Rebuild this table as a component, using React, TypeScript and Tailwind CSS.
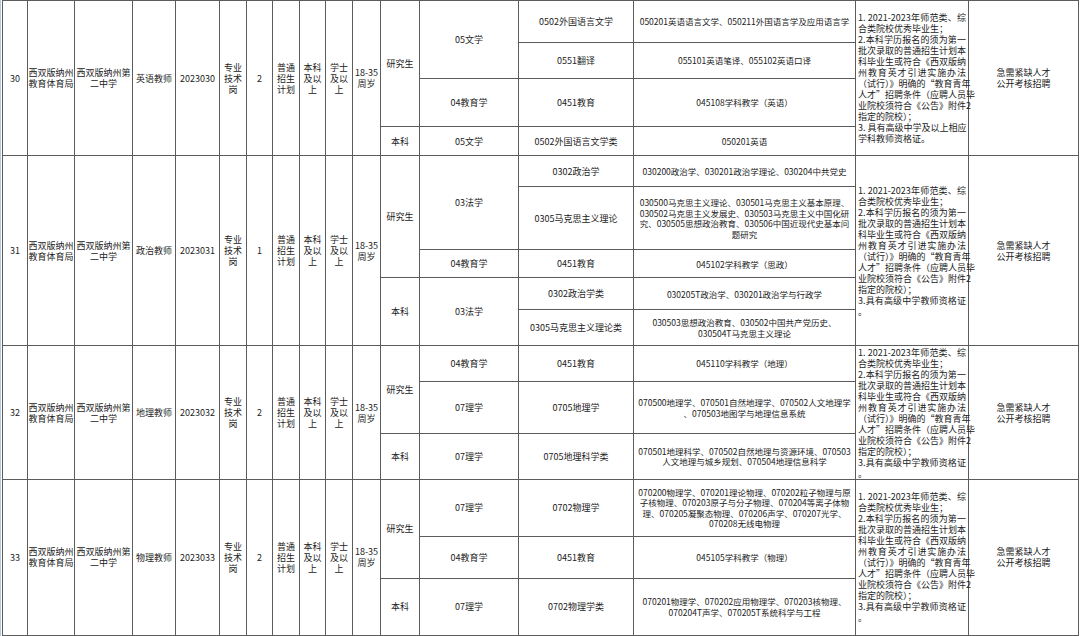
import React from "react";

const td = "border border-[#5c5c5c] p-0 text-center align-middle";
const tdm = "border border-[#5c5c5c] p-0 text-center align-middle text-[8.5px] leading-[10.5px]";

function Lines({ lines }: { lines: string[] }) {
  return (
    <div className="flex flex-col items-center">
      {lines.map((l, i) => (
        <div key={i} className="whitespace-nowrap">
          {l}
        </div>
      ))}
    </div>
  );
}

function Req({ variant }: { variant: "a" | "b" }) {
  const full = [
    "1. 2021-2023年师范类、综",
    "合类院校优秀毕业生；",
    "2.本科学历报名的须为第一",
    "批次录取的普通招生计划本",
    "科毕业生或符合《西双版纳",
    "州教育英才引进实施办法",
    "（试行）》明确的“教育青年",
    "人才”招聘条件（应聘人员毕",
    "业院校须符合《公告》附件2",
    "指定的院校）；",
  ];
  const tail =
    variant === "a"
      ? ["3. 具有高级中学及以上相应", "学科教师资格证。"]
      : ["3.具有高级中学教师资格证", "。"];
  const all = [...full, ...tail];
  const justified = new Set([0, 2, 3, 4, 5, 6, 7, 8, 10]);
  return (
    <div className="px-[2px] text-left">
      {all.map((l, i) => (
        <div
          key={i}
          className={
            justified.has(i)
              ? "whitespace-nowrap text-justify [text-align-last:justify]"
              : "whitespace-nowrap"
          }
        >
          {l}
        </div>
      ))}
    </div>
  );
}

function Common({
  no,
  pos,
  code,
  count,
  span,
}: {
  no: string;
  pos: string;
  code: string;
  count: string;
  span: number;
}) {
  return (
    <>
      <td rowSpan={span} className={td}>{no}</td>
      <td rowSpan={span} className={td}>
        <Lines lines={["西双版纳州", "教育体育局"]} />
      </td>
      <td rowSpan={span} className={td}>
        <Lines lines={["西双版纳州第", "二中学"]} />
      </td>
      <td rowSpan={span} className={td}>{pos}</td>
      <td rowSpan={span} className={td}>{code}</td>
      <td rowSpan={span} className={td}>
        <Lines lines={["专业", "技术", "岗"]} />
      </td>
      <td rowSpan={span} className={td}>{count}</td>
      <td rowSpan={span} className={td}>
        <Lines lines={["普通", "招生", "计划"]} />
      </td>
      <td rowSpan={span} className={td}>
        <Lines lines={["本科", "及以", "上"]} />
      </td>
      <td rowSpan={span} className={td}>
        <Lines lines={["学士", "及以", "上"]} />
      </td>
      <td rowSpan={span} className={td}>
        <Lines lines={["18-35", "周岁"]} />
      </td>
    </>
  );
}

function Tail({ span, variant }: { span: number; variant: "a" | "b" }) {
  return (
    <>
      <td rowSpan={span} className={td}>
        <Req variant={variant} />
      </td>
      <td rowSpan={span} className={td}>
        <Lines lines={["急需紧缺人才", "公开考核招聘"]} />
      </td>
    </>
  );
}

export default function App() {
  const widths = [25, 47, 58, 43, 44, 27, 26, 27, 26, 27, 28, 39, 99, 115, 222, 113, 110];
  return (
    <div className="flex h-[636px] w-[1080px] overflow-hidden bg-white font-['Noto_Sans_CJK_SC',sans-serif] text-[9px] leading-[11px] text-[#222]">
      <div className="h-full w-[2px] shrink-0 border-l border-[#b7c8e3]" />
      <table className="table-fixed border-collapse" style={{ width: 1076 }}>
        <colgroup>
          {widths.map((w, i) => (
            <col key={i} style={{ width: w }} />
          ))}
        </colgroup>
        <tbody>
          {/* 30 */}
          <tr className="h-[42px]">
            <Common no="30" pos="英语教师" code="2023030" count="2" span={4} />
            <td rowSpan={3} className={td}>研究生</td>
            <td rowSpan={2} className={td}>05文学</td>
            <td className={td}>0502外国语言文学</td>
            <td className={tdm}>050201英语语言文学、050211外国语言学及应用语言学</td>
            <Tail span={4} variant="a" />
          </tr>
          <tr className="h-[36px]">
            <td className={td}>0551翻译</td>
            <td className={tdm}>055101英语笔译、055102英语口译</td>
          </tr>
          <tr className="h-[48px]">
            <td className={td}>04教育学</td>
            <td className={td}>0451教育</td>
            <td className={tdm}>045108学科教学（英语）</td>
          </tr>
          <tr className="h-[29px]">
            <td className={td}>本科</td>
            <td className={td}>05文学</td>
            <td className={td}>0502外国语言文学类</td>
            <td className={tdm}>050201英语</td>
          </tr>

          {/* 31 */}
          <tr className="h-[31px]">
            <Common no="31" pos="政治教师" code="2023031" count="1" span={5} />
            <td rowSpan={3} className={td}>研究生</td>
            <td rowSpan={2} className={td}>03法学</td>
            <td className={td}>0302政治学</td>
            <td className={tdm}>030200政治学、030201政治学理论、030204中共党史</td>
            <Tail span={5} variant="b" />
          </tr>
          <tr className="h-[63px]">
            <td className={td}>0305马克思主义理论</td>
            <td className={tdm}>
              <Lines
                lines={[
                  "030500马克思主义理论、030501马克思主义基本原理、",
                  "030502马克思主义发展史、030503马克思主义中国化研",
                  "究、030505思想政治教育、030506中国近现代史基本问",
                  "题研究",
                ]}
              />
            </td>
          </tr>
          <tr className="h-[28px]">
            <td className={td}>04教育学</td>
            <td className={td}>0451教育</td>
            <td className={tdm}>045102学科教学（思政）</td>
          </tr>
          <tr className="h-[32px]">
            <td rowSpan={2} className={td}>本科</td>
            <td rowSpan={2} className={td}>03法学</td>
            <td className={td}>0302政治学类</td>
            <td className={tdm}>030205T政治学、030201政治学与行政学</td>
          </tr>
          <tr className="h-[36px]">
            <td className={td}>0305马克思主义理论类</td>
            <td className={tdm}>
              <Lines lines={["030503思想政治教育、030502中国共产党历史、", "030504T马克思主义理论"]} />
            </td>
          </tr>

          {/* 32 */}
          <tr className="h-[35px]">
            <Common no="32" pos="地理教师" code="2023032" count="2" span={3} />
            <td rowSpan={2} className={td}>研究生</td>
            <td className={td}>04教育学</td>
            <td className={td}>0451教育</td>
            <td className={tdm}>045110学科教学（地理）</td>
            <Tail span={3} variant="b" />
          </tr>
          <tr className="h-[52px]">
            <td className={td}>07理学</td>
            <td className={td}>0705地理学</td>
            <td className={tdm}>
              <Lines lines={["070500地理学、070501自然地理学、070502人文地理学", "、070503地图学与地理信息系统"]} />
            </td>
          </tr>
          <tr className="h-[45px]">
            <td className={td}>本科</td>
            <td className={td}>07理学</td>
            <td className={td}>0705地理科学类</td>
            <td className={tdm}>
              <Lines lines={["070501地理科学、070502自然地理与资源环境、070503", "人文地理与城乡规划、070504地理信息科学"]} />
            </td>
          </tr>

          {/* 33 */}
          <tr className="h-[57px]">
            <Common no="33" pos="物理教师" code="2023033" count="2" span={3} />
            <td rowSpan={2} className={td}>研究生</td>
            <td className={td}>07理学</td>
            <td className={td}>0702物理学</td>
            <td className={tdm}>
              <Lines
                lines={[
                  "070200物理学、070201理论物理、070202粒子物理与原",
                  "子核物理、070203原子与分子物理、070204等离子体物",
                  "理、070205凝聚态物理、070206声学、070207光学、",
                  "070208无线电物理",
                ]}
              />
            </td>
            <Tail span={3} variant="b" />
          </tr>
          <tr className="h-[42px]">
            <td className={td}>04教育学</td>
            <td className={td}>0451教育</td>
            <td className={tdm}>045105学科教学（物理）</td>
          </tr>
          <tr className="h-[57px]">
            <td className={td}>本科</td>
            <td className={td}>07理学</td>
            <td className={td}>0702物理学类</td>
            <td className={tdm}>
              <Lines lines={["070201物理学、070202应用物理学、070203核物理、", "070204T声学、070205T系统科学与工程"]} />
            </td>
          </tr>
        </tbody>
      </table>
    </div>
  );
}
